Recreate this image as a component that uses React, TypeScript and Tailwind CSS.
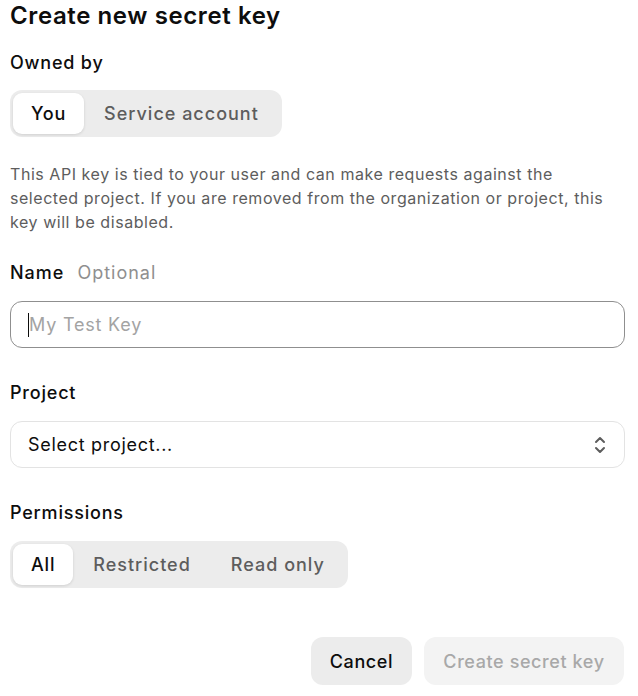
import React from "react";

function ChevronsUpDown() {
  return (
    <svg width="24" height="24" viewBox="0 0 24 24" fill="none" stroke="#5d5d5d" strokeWidth="2" strokeLinecap="round" strokeLinejoin="round">
      <path d="m8 15 4 4 4-4" />
      <path d="m8 9 4-4 4 4" />
    </svg>
  );
}

function Segmented({ items, active }: { items: string[]; active: number }) {
  return (
    <div className="inline-flex h-[47px] items-stretch rounded-[12px] bg-[#ececec] p-[3px] self-start">
      {items.map((it, i) => (
        <div
          key={it}
          className={
            i === active
              ? "flex items-center rounded-[9px] bg-white px-[18px] text-[18px] font-medium tracking-[0.8px] text-[#0d0d0d] shadow-[0_1px_3px_rgba(0,0,0,0.12)]"
              : "flex items-center px-[20px] text-[18px] font-medium tracking-[1px] text-[#5d5d5d]"
          }
        >
          {it}
        </div>
      ))}
    </div>
  );
}

export default function App() {
  return (
    <div
      className="flex w-[638px] h-[696px] flex-col bg-white pl-[10px] pr-[13px]"
      style={{ fontFamily: "Inter, 'Noto Sans', sans-serif" }}
    >
      <h1 className="h-[32px] text-[24px] font-semibold leading-[32px] text-[#0d0d0d] tracking-[0.6px]">
        Create new secret key
      </h1>
      <div className="mt-[17px] h-[28px] text-[18px] font-medium leading-[28px] tracking-[0.8px] text-[#0d0d0d]">Owned by</div>
      <div className="mt-[13px] flex">
        <Segmented items={["You", "Service account"]} active={0} />
      </div>
      <p className="mt-[25px] text-[16px] leading-[24px] tracking-[0.55px] text-[#5d5d5d]">
        This API key is tied to your user and can make requests against the
        <br />
        selected project. If you are removed from the organization or project, this
        <br />
        key will be disabled.
      </p>
      <div className="mt-[25px] flex h-[28px] items-center gap-[13px] text-[18px] leading-[28px] tracking-[1px]">
        <span className="font-medium text-[#0d0d0d]">Name</span>
        <span className="text-[#8f8f8f]">Optional</span>
      </div>
      <div className="mt-[14px] flex h-[47px] items-center rounded-[12px] border border-[#8f8f8f] pl-[17px]">
        <span className="h-[24px] w-[1px] bg-[#0d0d0d]" />
        <span className="text-[18px] tracking-[0.8px] text-[#a3a3a3]">My Test Key</span>
      </div>
      <div className="mt-[31px] h-[28px] text-[18px] font-medium leading-[28px] tracking-[0.8px] text-[#0d0d0d]">Project</div>
      <div className="mt-[14px] flex h-[47px] items-center justify-between rounded-[12px] border border-[#e3e3e3] pl-[17px] pr-[12px]">
        <span className="text-[18px] tracking-[0.7px] text-[#0d0d0d]">Select project...</span>
        <ChevronsUpDown />
      </div>
      <div className="mt-[31px] h-[28px] text-[18px] font-medium leading-[28px] tracking-[0.8px] text-[#0d0d0d]">Permissions</div>
      <div className="mt-[14px] flex">
        <Segmented items={["All", "Restricted", "Read only"]} active={0} />
      </div>
      <div className="mt-[49px] flex justify-end gap-[12px] pr-[1px]">
        <button className="h-[48px] w-[101px] rounded-[12px] bg-[#ececec] text-[18px] font-medium tracking-[0.6px] text-[#0d0d0d]">
          Cancel
        </button>
        <button className="h-[48px] w-[200px] rounded-[12px] bg-[#f3f3f3] text-[18px] font-medium tracking-[0.6px] text-[#a8a8a8]">
          Create secret key
        </button>
      </div>
    </div>
  );
}
